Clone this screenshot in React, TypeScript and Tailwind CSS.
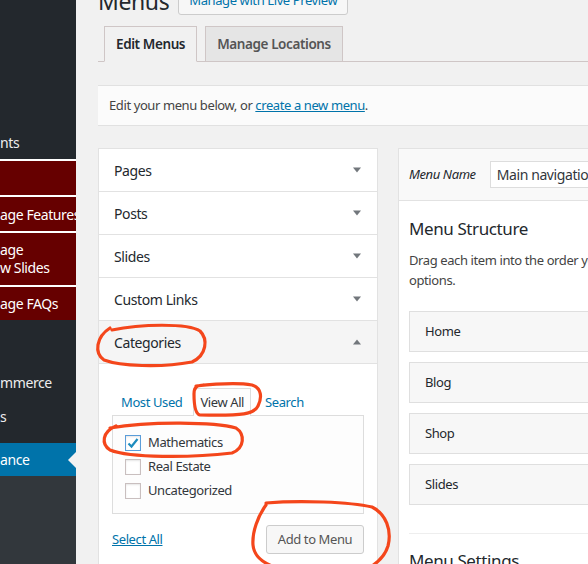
import React from "react";

const font = { fontFamily: '"Noto Sans", "Open Sans", Arial, sans-serif', letterSpacing: "-0.4px" };

function Down() {
  return (
    <svg width="10" height="6" viewBox="0 0 10 6"><path d="M1 0.5 L9 0.5 L5 5.5 Z" fill="#72777c" /></svg>
  );
}
function Up() {
  return (
    <svg width="10" height="6" viewBox="0 0 10 6"><path d="M1 5.5 L9 5.5 L5 0.5 Z" fill="#72777c" /></svg>
  );
}

function AccRow({ label, open }: { label: string; open?: boolean }) {
  return (
    <div className={`flex h-[43px] items-center justify-between border-b border-[#e2e2e2] pl-[15px] pr-[15px] text-[14px] text-[#23282d] ${open ? "bg-[#f5f5f5]" : "bg-white"}`}>
      <span>{label}</span>
      {open ? <Up /> : <Down />}
    </div>
  );
}

function Check({ checked, label }: { checked?: boolean; label: string }) {
  return (
    <div className="flex h-[24px] items-center gap-[7px]">
      <div className={`flex h-[16px] w-[16px] items-center justify-center border bg-white shadow-[inset_0_1px_2px_rgba(0,0,0,0.1)] ${checked ? "border-[#5b9dd9]" : "border-[#c9bfbf]"}`}>
        {checked && (
          <svg width="14" height="14" viewBox="0 0 14 14"><path d="M2.5 7.5 L5.5 10.5 L11.5 3" stroke="#1e8cbe" strokeWidth="2.2" fill="none" /></svg>
        )}
      </div>
      <span className="text-[13px] text-[#32373c]">{label}</span>
    </div>
  );
}

function MenuItem({ label }: { label: string }) {
  return (
    <div className="flex h-[41px] items-center border border-[#dfdfdf] bg-[#f7f7f7] pl-[15px] text-[13px] text-[#23282d]">
      {label}
    </div>
  );
}

export default function App() {
  return (
    <div className="relative flex h-[564px] w-[588px] overflow-hidden bg-[#f1f1f1]" style={font}>
      {/* Sidebar */}
      <div className="flex w-[76px] shrink-0 flex-col overflow-hidden bg-[#23282d] text-[14px] text-[#eeeeee]">
        <div className="h-[125px] shrink-0" />
        <div className="flex h-[34px] shrink-0 items-center whitespace-nowrap">nts</div>
        <div className="h-[2px] shrink-0 bg-white" />
        <div className="h-[34px] shrink-0 bg-[#660000]" />
        <div className="h-[2px] shrink-0 bg-white" />
        <div className="flex h-[34px] shrink-0 items-center whitespace-nowrap bg-[#660000] text-white">age Features</div>
        <div className="h-[2px] shrink-0 bg-white" />
        <div className="flex h-[52px] shrink-0 flex-col justify-center whitespace-nowrap bg-[#660000] leading-[18px] text-white">
          <span>age</span>
          <span>w Slides</span>
        </div>
        <div className="h-[2px] shrink-0 bg-white" />
        <div className="flex h-[33px] shrink-0 items-center whitespace-nowrap bg-[#660000] text-white">age FAQs</div>
        <div className="h-[45px] shrink-0" />
        <div className="flex h-[34px] shrink-0 items-center whitespace-nowrap">mmerce</div>
        <div className="flex h-[34px] shrink-0 items-center whitespace-nowrap">s</div>
        <div className="h-[10px] shrink-0" />
        <div className="relative flex h-[33px] shrink-0 items-center whitespace-nowrap bg-[#0073aa] text-white">
          ance
          <div className="absolute right-0 top-[9px] h-0 w-0 border-y-[8px] border-r-[8px] border-y-transparent border-r-[#f1f1f1]" />
        </div>
        <div className="flex-1 bg-[#32373c]" />
      </div>

      {/* Main */}
      <div className="w-[1200px] shrink-0 pl-[22px]">
        {/* Title row */}
        <div className="-mt-[14px] flex h-[30px] items-center gap-[9px]">
          <h1 className="text-[23px] font-normal leading-[29px] text-[#23282d]">Menus</h1>
          <div className="flex h-[28px] w-[170px] items-center justify-center rounded-[3px] border border-[#ccc] bg-[#f7f7f7] text-[13px] text-[#0073aa]">
            Manage with Live Preview
          </div>
        </div>

        {/* Tabs */}
        <div className="mt-[10px] flex h-[36px] items-end border-b border-[#cfc6c6] pl-[6px]">
          <div className="-mb-px flex h-[36px] items-center border border-[#cfc6c6] border-b-[#f1f1f1] bg-[#f1f1f1] px-[11px] text-[13.5px] font-semibold text-[#23282d]">
            Edit Menus
          </div>
          <div className="-mb-px ml-[8px] flex h-[36px] items-center border border-[#cfc6c6] bg-[#e5e5e5] px-[11px] text-[13.5px] font-semibold text-[#555]">
            Manage Locations
          </div>
        </div>

        {/* Notice */}
        <div className="mt-[23px] flex h-[41px] items-center border-y border-[#e1e1e1] bg-[#fbfbfb] pl-[11px] text-[13px] text-[#444]">
          <span>
            Edit your menu below, or <span className="text-[#0073aa] underline">create a new menu</span>.
          </span>
        </div>

        {/* Columns */}
        <div className="mt-[22px] flex gap-[20px]">
          {/* Left */}
          <div className="w-[280px] shrink-0">
            <div className="border border-[#e2e2e2] border-b-0 bg-white">
              <AccRow label="Pages" />
              <AccRow label="Posts" />
              <AccRow label="Slides" />
              <AccRow label="Custom Links" />
              <AccRow label="Categories" open />
              <div className="h-[200px] px-[13px] pt-[24px]">
                <div className="flex items-end pl-[9px] text-[13px] leading-[18px] text-[#0073aa]">
                  <span className="pb-[4px]">Most Used</span>
                  <span className="relative -mb-px ml-[11px] border border-b-0 border-[#ddd] bg-[#fdfdfd] px-[6px] pb-[5px] pt-[4px] text-[#32373c]">View All</span>
                  <span className="ml-[14px] pb-[4px]">Search</span>
                </div>
                <div className="h-[99px] border border-[#ddd] bg-[#fdfdfd] pl-[12px] pt-[15px]">
                  <Check checked label="Mathematics" />
                  <Check label="Real Estate" />
                  <Check label="Uncategorized" />
                </div>
                <div className="mt-[11px] flex items-center justify-between">
                  <span className="text-[13px] text-[#0073aa] underline">Select All</span>
                  <div className="flex h-[29px] w-[98px] items-center justify-center rounded-[3px] border border-[#ccc] bg-[#f7f7f7] text-[13px] text-[#555]">
                    Add to Menu
                  </div>
                </div>
              </div>
            </div>
          </div>

          {/* Right */}
          <div className="w-[860px] shrink-0 border border-[#e2e2e2] bg-white">
            <div className="flex h-[52px] items-center border-b border-[#e2e2e2] bg-[#f9f9f9] pl-[10px]">
              <span className="text-[13px] italic text-[#23282d]">Menu Name</span>
              <div className="ml-[14px] flex h-[27px] w-[220px] items-center border border-[#ddd] bg-white pl-[6px] text-[14px] text-[#32373c]">
                Main navigation
              </div>
            </div>
            <div className="pl-[10px]">
              <h3 className="mt-[16px] text-[17px] font-normal leading-[24px] text-[#23282d]">Menu Structure</h3>
              <p className="mt-[9px] whitespace-nowrap text-[13px] leading-[20px] text-[#444]">
                Drag each item into the order you prefer. Click the arrow on the right of the item to reveal additional configuration
                <br />
                options.
              </p>
              <div className="mt-[21px] flex flex-col gap-[10px]">
                <MenuItem label="Home" />
                <MenuItem label="Blog" />
                <MenuItem label="Shop" />
                <MenuItem label="Slides" />
              </div>
              <div className="mt-[28px] border-t border-[#eee] pt-[15px] text-[17px] leading-[24px] text-[#23282d]">
                Menu Settings
              </div>
            </div>
          </div>
        </div>
      </div>

      {/* Annotations */}
      <svg className="pointer-events-none absolute left-0 top-0" width="588" height="564" viewBox="0 0 588 564">
        <g fill="none" stroke="#f4461b" strokeWidth="3.2" strokeLinecap="round" strokeLinejoin="round">
          <path d="M112 330 C140 324, 188 323, 200 331 C208 339, 207 355, 192 362 C160 368, 120 366, 104 360 C94 353, 96 337, 110 328" />
          <path d="M196 386 C215 384, 240 383, 252 385 C262 388, 262 398, 258 406 C254 414, 244 416, 200 415 C195 414, 194 405, 194 394 C194 388, 196 385, 204 385" />
          <path d="M110 428 C150 421, 215 422, 236 428 C245 434, 245 448, 232 453 C190 458, 130 458, 110 450 C101 444, 102 432, 116 426" />
          <path d="M266 505 C258 516, 252 532, 253 545 C254 556, 262 562, 272 566" />
          <path d="M266 503 C300 500, 350 502, 372 507 C386 514, 392 530, 388 546 C385 556, 378 562, 372 566" />
        </g>
      </svg>
    </div>
  );
}
